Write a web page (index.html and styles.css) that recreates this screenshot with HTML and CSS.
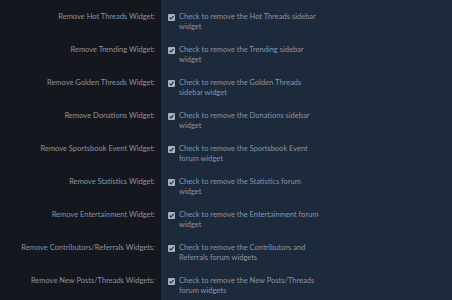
FILE: index.html
```html
<!DOCTYPE html>
<html lang="en">
<head>
  <meta charset="UTF-8">
  <title>Widget Options</title>
  <link rel="stylesheet" href="styles.css">
</head>
<body>
  <div class="options">
    <div class="row">
      <div class="label">Remove Hot Threads Widget:</div>
      <div class="value"><svg class="box" viewBox="0 0 7 7"><rect width="7" height="7" rx="1"/><path d="M1.6 3.6 L3 5 L5.6 1.8"/></svg><span>Check to remove the Hot Threads sidebar widget</span></div>
    </div>
    <div class="row">
      <div class="label">Remove Trending Widget:</div>
      <div class="value"><svg class="box" viewBox="0 0 7 7"><rect width="7" height="7" rx="1"/><path d="M1.6 3.6 L3 5 L5.6 1.8"/></svg><span>Check to remove the Trending sidebar widget</span></div>
    </div>
    <div class="row">
      <div class="label">Remove Golden Threads Widget:</div>
      <div class="value"><svg class="box" viewBox="0 0 7 7"><rect width="7" height="7" rx="1"/><path d="M1.6 3.6 L3 5 L5.6 1.8"/></svg><span>Check to remove the Golden Threads sidebar widget</span></div>
    </div>
    <div class="row">
      <div class="label">Remove Donations Widget:</div>
      <div class="value"><svg class="box" viewBox="0 0 7 7"><rect width="7" height="7" rx="1"/><path d="M1.6 3.6 L3 5 L5.6 1.8"/></svg><span>Check to remove the Donations sidebar widget</span></div>
    </div>
    <div class="row">
      <div class="label">Remove Sportsbook Event Widget:</div>
      <div class="value"><svg class="box" viewBox="0 0 7 7"><rect width="7" height="7" rx="1"/><path d="M1.6 3.6 L3 5 L5.6 1.8"/></svg><span>Check to remove the Sportsbook Event forum widget</span></div>
    </div>
    <div class="row">
      <div class="label">Remove Statistics Widget:</div>
      <div class="value"><svg class="box" viewBox="0 0 7 7"><rect width="7" height="7" rx="1"/><path d="M1.6 3.6 L3 5 L5.6 1.8"/></svg><span>Check to remove the Statistics forum widget</span></div>
    </div>
    <div class="row">
      <div class="label">Remove Entertainment Widget:</div>
      <div class="value"><svg class="box" viewBox="0 0 7 7"><rect width="7" height="7" rx="1"/><path d="M1.6 3.6 L3 5 L5.6 1.8"/></svg><span>Check to remove the Entertainment forum widget</span></div>
    </div>
    <div class="row">
      <div class="label">Remove Contributors/Referrals Widgets:</div>
      <div class="value"><svg class="box" viewBox="0 0 7 7"><rect width="7" height="7" rx="1"/><path d="M1.6 3.6 L3 5 L5.6 1.8"/></svg><span>Check to remove the Contributors and Referrals forum widgets</span></div>
    </div>
    <div class="row">
      <div class="label">Remove New Posts/Threads Widgets:</div>
      <div class="value"><svg class="box" viewBox="0 0 7 7"><rect width="7" height="7" rx="1"/><path d="M1.6 3.6 L3 5 L5.6 1.8"/></svg><span>Check to remove the New Posts/Threads forum widgets</span></div>
    </div>
  </div>
</body>
</html>
```

FILE: styles.css
```css
body {
  margin: 0;
  background: #14171d;
  font-family: Lato, "Open Sans", sans-serif;
  font-size: 7.5px;
  line-height: 10px;
  color: #8a93a5;
}
.options {
  display: flex;
  flex-direction: column;
}
.row {
  display: grid;
  grid-template-columns: 160px 1fr;
}
.row:first-child .label,
.row:first-child .value {
  padding-top: 12px;
}
.label {
  text-align: right;
  padding: 6px 5px 7px 0;
}
.value {
  display: flex;
  align-items: flex-start;
  gap: 4px;
  background: #1d2a3c;
  border-left: 1px solid #10141a;
  padding: 6px 0 7px 7px;
}
.value span {
  width: 146px;
}
.box {
  width: 7px;
  height: 7px;
  margin-top: 1.5px;
  flex-shrink: 0;
}
.box rect {
  fill: #a7b1c0;
}
.box path {
  fill: none;
  stroke: #1d2a3c;
  stroke-width: 1.1;
}
```
